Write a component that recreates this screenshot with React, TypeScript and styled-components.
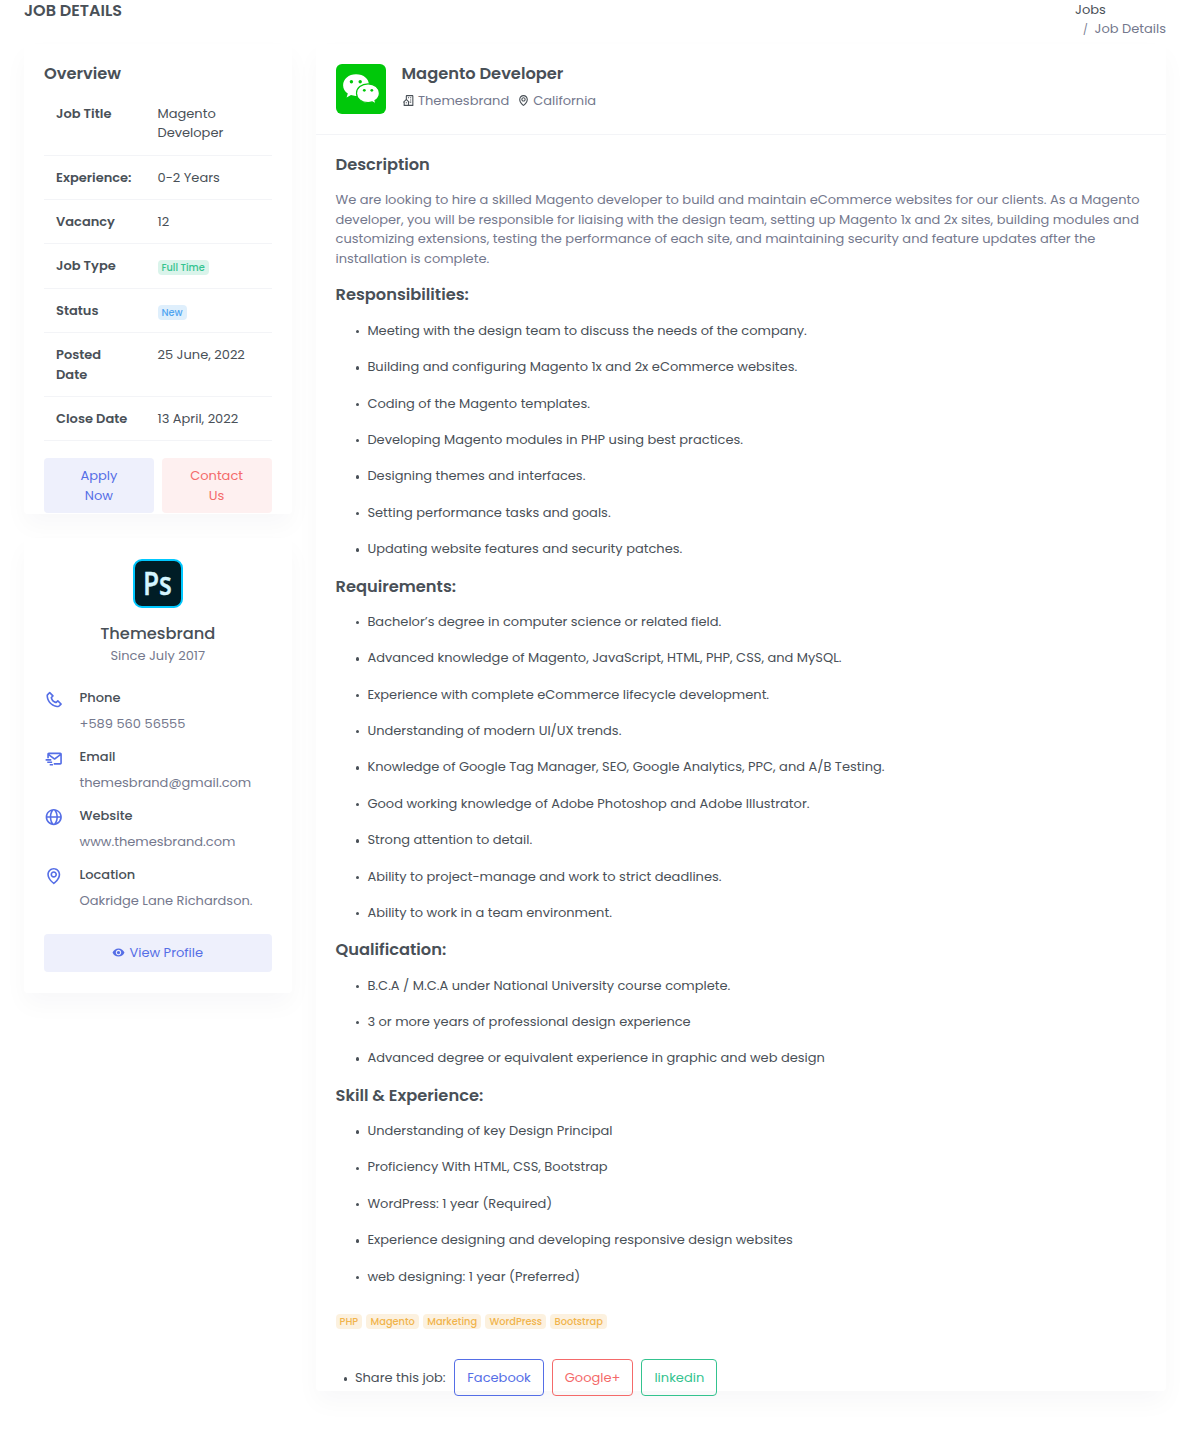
import React from 'react';
import styled, { createGlobalStyle } from 'styled-components';
import { BiBuildingHouse, BiGlobe, BiMailSend, BiMap, BiPhone } from 'react-icons/bi';
import { MdRemoveRedEye } from 'react-icons/md';

const c = {
  text: '#495057',
  muted: '#74788d',
  line: '#f3f4f7',
  primary: '#556ee6',
  danger: '#f46a6a',
  success: '#34c38f',
  info: '#50a5f1',
  warning: '#f1b44c',
};

const Global = createGlobalStyle`
  *, *::before, *::after { box-sizing: border-box; }
  body {
    margin: 0;
    background: #fff;
    color: ${c.text};
    font-family: Poppins, Inter, "Liberation Sans", sans-serif;
    font-size: 13px;
    line-height: 19.5px;
  }
  h4, h5, h6, p, ul { margin: 0; padding: 0; }
  ul { list-style: none; }
`;

const Line = styled.span`
  display: block;
  white-space: nowrap;
`;

const Page = styled.div`
  width: 1190px;
  height: 1433px;
  padding: 0 24px;
  overflow: hidden;
`;
const TitleBar = styled.header`
  display: flex;
  justify-content: space-between;
  height: 44px;
`;
const PageTitle = styled.h4`
  font-size: 16px;
  font-weight: 600;
  line-height: 21px;
`;
const Breadcrumb = styled.nav`
  width: 91px;
`;
const Crumb = styled.div<{ $current?: boolean }>`
  display: flex;
  gap: 8px;
  padding-left: ${p => (p.$current ? 8 : 0)}px;
  color: ${p => (p.$current ? c.muted : c.text)};
  line-height: 19.4px;
  white-space: nowrap;
`;
const Slash = styled.span`
  width: 3.5px;
  font-size: 10px;
  line-height: 22px;
`;

const Columns = styled.main`
  display: grid;
  grid-template-columns: 267.5px 850.5px;
  gap: 24px;
  align-items: start;
`;
const Side = styled.div`
  display: flex;
  flex-direction: column;
  gap: 24px;
`;
const Card = styled.section<{ $h: number }>`
  height: ${p => p.$h}px;
  background: #fff;
  border-radius: 4px;
  box-shadow: 0 12px 24px rgba(18, 38, 63, 0.03);
`;
const OverviewCard = styled(Card)`
  padding: 20px 20px 0;
`;
const CompanyCard = styled(Card)`
  padding: 20.5px 20px 0;
`;

const Heading = styled.h5<{ $w?: number }>`
  font-size: 16.25px;
  font-weight: ${p => p.$w ?? 600};
  line-height: 20px;
`;
const SectionHeading = styled(Heading)`
  line-height: 21px;
`;

const Facts = styled.div`
  margin-top: 7.7px;
`;
const Fact = styled.div`
  display: grid;
  grid-template-columns: 101.5px 1fr;
  border-bottom: 1px solid ${c.line};
`;
const FactCell = styled.div<{ $head?: boolean }>`
  padding: 12px 0 11.5px 12px;
  font-weight: ${p => (p.$head ? 600 : 400)};
  line-height: 19.8px;
`;

const tint = {
  success: 'rgba(52, 195, 143, 0.18)',
  info: 'rgba(80, 165, 241, 0.18)',
  warning: 'rgba(241, 180, 76, 0.18)',
};
const Badge = styled.span<{ $tone: 'success' | 'info' | 'warning' }>`
  display: inline-flex;
  align-items: center;
  justify-content: center;
  height: 15px;
  padding: 0 4px;
  border-radius: 4px;
  background: ${p => tint[p.$tone]};
  color: ${p => c[p.$tone]};
  font-size: 9.75px;
  font-weight: 500;
  line-height: 15px;
  vertical-align: -1px;
`;

const Actions = styled.div`
  display: flex;
  gap: 8px;
  margin-top: 17px;
`;
const SoftButton = styled.button<{ $tone: 'primary' | 'danger'; $h: number }>`
  flex: 1;
  height: ${p => p.$h}px;
  padding: 0;
  border: 0;
  border-radius: 4px;
  background: ${p => (p.$tone === 'primary' ? 'rgba(85, 110, 230, 0.1)' : 'rgba(244, 106, 106, 0.1)')};
  color: ${p => c[p.$tone]};
  font: inherit;
`;
const ProfileButton = styled(SoftButton)`
  display: flex;
  align-items: center;
  justify-content: center;
  gap: 4px;
  width: 100%;
  margin-top: 24.1px;
`;

const Company = styled.div`
  display: flex;
  flex-direction: column;
  align-items: center;
`;
const CompanyName = styled(Heading)`
  margin-top: 16px;
`;
const Since = styled.p`
  margin-top: 2.9px;
  color: ${c.muted};
`;
const Contacts = styled.ul`
  display: flex;
  flex-direction: column;
  gap: 13.4px;
  margin-top: 22.5px;
`;
const Contact = styled.li`
  display: flex;
  gap: 16px;
`;
const ContactIcon = styled.span`
  display: flex;
  width: 19.5px;
  padding-top: 1.5px;
  color: ${c.primary};
`;
const ContactName = styled.h6`
  font-size: 13px;
  font-weight: 500;
  line-height: 19.5px;
`;
const ContactValue = styled.p`
  margin-top: 6.4px;
  color: ${c.muted};
`;

const JobHead = styled.div`
  display: flex;
  gap: 16px;
  height: 90.5px;
  padding: 20px 20px 0;
  border-bottom: 1px solid ${c.line};
`;
const JobMeta = styled.div`
  display: flex;
  align-items: center;
  gap: 3.5px;
  margin-top: 7px;
  color: ${c.muted};
  svg { color: ${c.text}; }
`;
const Place = styled.span`
  display: flex;
  align-items: center;
  gap: 3.5px;
  margin-left: 4px;
`;
const JobBody = styled.div`
  padding: 20px 20px 0;
`;
const Lead = styled.p`
  margin: 15.9px 0 16.1px;
  color: ${c.muted};
`;
const Bullets = styled.ul`
  padding: 15.300px 0 0 20.5px;
`;
const Bullet = styled.li`
  display: flex;
  align-items: center;
  height: 19.5px;
  margin-bottom: 16.9px;
`;
const Dot = styled.i`
  width: 3.4px;
  height: 3.4px;
  margin: 2px 8px 0 0;
  border-radius: 50%;
  background: ${c.text};
`;
const Tags = styled.div`
  display: flex;
  gap: 4.2px;
  margin-top: 28.2px;
`;
const Tag = styled(Badge)`
  padding: 0 4.1px;
  font-size: 9.82px;
`;
const Share = styled.div`
  display: flex;
  align-items: center;
  height: 37px;
  margin-top: 30px;
  padding-left: 8px;
`;
const ShareButtons = styled.div`
  display: flex;
  gap: 8px;
  margin-left: 8.7px;
`;
const OutlineButton = styled.button<{ $tone: 'primary' | 'danger' | 'success' }>`
  height: 37px;
  padding: 0 12px;
  border: 1px solid ${p => c[p.$tone]};
  border-radius: 4px;
  background: transparent;
  color: ${p => c[p.$tone]};
  font: inherit;
`;
const PsTile = styled.div`
  display: flex;
  align-items: center;
  justify-content: center;
  width: 50px;
  height: 49px;
  border: 2px solid #00c8ff;
  border-radius: 9px;
  background: #001d26;
  color: #d4f5ff;
  font: 600 32px/44px "Open Sans", "Noto Sans", sans-serif;
`;
const PsLetters = styled.span`
  margin-right: 1px;
  letter-spacing: -0.3px;
  -webkit-text-stroke: 0.4px #d4f5ff;
  transform: scaleX(0.82);
`;

const WeChat = () => (
  <svg width="50" height="50" viewBox="0 0 50 50">
    <rect width="50" height="50" rx="6" fill="#00c80a" />
    <path fill="#fff" d="M20 10.2c-7.300 0-12.900 4.900-12.900 11 0 3.500 1.800 6.400 4.700 8.400l-1.200 3.800 4.400-2.300c1.600.5 3.200.9 5.300.8 8-.2 12.700-5 12.700-10.900 0-5.900-5.100-10.800-13-10.800Z" />
    <path fill="#fff" stroke="#00c80a" strokeWidth="1.200" d="M32.100 19.800c-6.700 0-11.600 4.200-11.600 9.400 0 5.300 4.900 9.400 11.600 9.400 1.400 0 2.800-.3 4.100-.7l3.800 2.100-1-3.400c2.700-1.800 4.400-4.400 4.400-7.400 0-5.200-4.900-9.400-11.300-9.400Z" />
    <circle cx="15.400" cy="17.800" r="1.700" fill="#00c80a" />
    <circle cx="24.200" cy="17.800" r="1.700" fill="#00c80a" />
    <circle cx="28.300" cy="26.300" r="1.400" fill="#00c80a" />
    <circle cx="35.800" cy="26.300" r="1.400" fill="#00c80a" />
  </svg>
);

const facts: { head: string[]; value: React.ReactNode }[] = [
  { head: ['Job Title'], value: <><Line>Magento</Line><Line>Developer</Line></> },
  { head: ['Experience:'], value: '0-2 Years' },
  { head: ['Vacancy'], value: '12' },
  { head: ['Job Type'], value: <Badge $tone="success">Full Time</Badge> },
  { head: ['Status'], value: <Badge $tone="info">New</Badge> },
  { head: ['Posted', 'Date'], value: '25 June, 2022' },
  { head: ['Close Date'], value: '13 April, 2022' },
];

const contacts = [
  { icon: BiPhone, name: 'Phone', value: '+589 560 56555' },
  { icon: BiMailSend, name: 'Email', value: 'themesbrand@gmail.com' },
  { icon: BiGlobe, name: 'Website', value: 'www.themesbrand.com' },
  { icon: BiMap, name: 'Location', value: 'Oakridge Lane Richardson.' },
];

const lead = [
  'We are looking to hire a skilled Magento developer to build and maintain eCommerce websites for our clients. As a Magento',
  'developer, you will be responsible for liaising with the design team, setting up Magento 1x and 2x sites, building modules and',
  'customizing extensions, testing the performance of each site, and maintaining security and feature updates after the',
  'installation is complete.',
];

const sections = [
  {
    title: 'Responsibilities:',
    items: [
      'Meeting with the design team to discuss the needs of the company.',
      'Building and configuring Magento 1x and 2x eCommerce websites.',
      'Coding of the Magento templates.',
      'Developing Magento modules in PHP using best practices.',
      'Designing themes and interfaces.',
      'Setting performance tasks and goals.',
      'Updating website features and security patches.',
    ],
  },
  {
    title: 'Requirements:',
    items: [
      'Bachelor’s degree in computer science or related field.',
      'Advanced knowledge of Magento, JavaScript, HTML, PHP, CSS, and MySQL.',
      'Experience with complete eCommerce lifecycle development.',
      'Understanding of modern UI/UX trends.',
      'Knowledge of Google Tag Manager, SEO, Google Analytics, PPC, and A/B Testing.',
      'Good working knowledge of Adobe Photoshop and Adobe Illustrator.',
      'Strong attention to detail.',
      'Ability to project-manage and work to strict deadlines.',
      'Ability to work in a team environment.',
    ],
  },
  {
    title: 'Qualification:',
    items: [
      'B.C.A / M.C.A under National University course complete.',
      '3 or more years of professional design experience',
      'Advanced degree or equivalent experience in graphic and web design',
    ],
  },
  {
    title: 'Skill & Experience:',
    items: [
      'Understanding of key Design Principal',
      'Proficiency With HTML, CSS, Bootstrap',
      'WordPress: 1 year (Required)',
      'Experience designing and developing responsive design websites',
      'web designing: 1 year (Preferred)',
    ],
  },
];

const tags = ['PHP', 'Magento', 'Marketing', 'WordPress', 'Bootstrap'];

export default function App() {
  return (
    <Page>
      <Global />
      <TitleBar>
        <PageTitle>JOB DETAILS</PageTitle>
        <Breadcrumb>
          <Crumb>Jobs</Crumb>
          <Crumb $current><Slash>/</Slash>Job Details</Crumb>
        </Breadcrumb>
      </TitleBar>
      <Columns>
        <Side>
          <OverviewCard $h={470}>
            <Heading>Overview</Heading>
            <Facts>
              {facts.map(f => (
                <Fact key={f.head[0]}>
                  <FactCell $head>
                    {f.head.map(s => <Line key={s}>{s}</Line>)}
                  </FactCell>
                  <FactCell>{f.value}</FactCell>
                </Fact>
              ))}
            </Facts>
            <Actions>
              <SoftButton $tone="primary" $h={55}>
                <Line>Apply</Line><Line>Now</Line>
              </SoftButton>
              <SoftButton $tone="danger" $h={55}>
                <Line>Contact</Line><Line>Us</Line>
              </SoftButton>
            </Actions>
          </OverviewCard>
          <CompanyCard $h={454.5}>
            <Company>
              <PsTile><PsLetters>Ps</PsLetters></PsTile>
              <CompanyName $w={500}>Themesbrand</CompanyName>
              <Since>Since July 2017</Since>
            </Company>
            <Contacts>
              {contacts.map(({ icon: Icon, name, value }) => (
                <Contact key={name}>
                  <ContactIcon><Icon size={20} /></ContactIcon>
                  <div>
                    <ContactName>{name}</ContactName>
                    <ContactValue>{value}</ContactValue>
                  </div>
                </Contact>
              ))}
            </Contacts>
            <ProfileButton $tone="primary" $h={37.5}>
              <MdRemoveRedEye size={13} />
              View Profile
            </ProfileButton>
          </CompanyCard>
        </Side>
        <Card $h={1346.5}>
          <JobHead>
            <WeChat />
            <div>
              <Heading>Magento Developer</Heading>
              <JobMeta>
                <BiBuildingHouse size={13} />
                Themesbrand
                <Place><BiMap size={13} />California</Place>
              </JobMeta>
            </div>
          </JobHead>
          <JobBody>
            <Heading>Description</Heading>
            <Lead>
              {lead.map(s => <Line key={s}>{s}</Line>)}
            </Lead>
            {sections.map(sec => (
              <React.Fragment key={sec.title}>
                <SectionHeading>{sec.title}</SectionHeading>
                <Bullets>
                  {sec.items.map(s => <Bullet key={s}><Dot />{s}</Bullet>)}
                </Bullets>
              </React.Fragment>
            ))}
            <Tags>
              {tags.map(s => <Tag key={s} $tone="warning">{s}</Tag>)}
            </Tags>
            <Share>
              <Dot />
              Share this job:
              <ShareButtons>
                <OutlineButton $tone="primary">Facebook</OutlineButton>
                <OutlineButton $tone="danger">Google+</OutlineButton>
                <OutlineButton $tone="success">linkedin</OutlineButton>
              </ShareButtons>
            </Share>
          </JobBody>
        </Card>
      </Columns>
    </Page>
  );
}
